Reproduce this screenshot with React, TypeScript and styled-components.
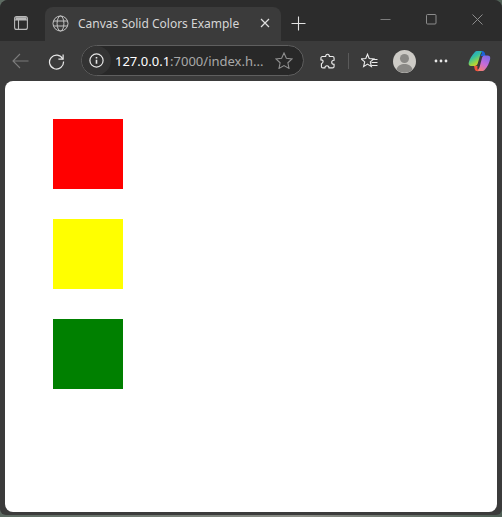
import * as React from "react";
import styled, { createGlobalStyle } from "styled-components";

const GlobalStyle = createGlobalStyle`
  html, body {
    margin: 0;
    padding: 0;
    height: 517px;
    overflow: hidden;
    background: linear-gradient(90deg, #5d6b62 0, #8d8f88 60%, #4f5f55 100%);
  }
`;

const SWindow = styled.div`
  width: 502px;
  height: 515px;
  background: #3b3b3b;
  border-radius: 8px 8px 6px 6px;
  display: flex;
  flex-direction: column;
  overflow: hidden;
  font-family: "Noto Sans", "Open Sans", sans-serif;
`;

const STitleBar = styled.div`
  height: 41px;
  flex: none;
  background: #2c2c2c;
  display: flex;
  align-items: flex-end;
  padding-left: 14px;
`;

const SSideButton = styled.div`
  width: 15px;
  height: 36px;
  display: flex;
  align-items: center;
  margin-right: 16px;
  align-self: flex-end;
  padding-bottom: 0;
`;

const STab = styled.div`
  width: 236px;
  height: 34px;
  background: #3b3b3b;
  border-radius: 8px 8px 0 0;
  display: flex;
  align-items: center;
  padding: 0 11px 2px 7px;
  box-sizing: border-box;
`;

const STabTitle = styled.span`
  flex: 1;
  margin-left: 9px;
  font-size: 12px;
  color: #d6d6d6;
  white-space: nowrap;
`;

const SNewTab = styled.div`
  width: 16px;
  height: 36px;
  margin-left: 10px;
  display: flex;
  align-items: center;
`;

const SCaptions = styled.div`
  margin-left: auto;
  align-self: flex-start;
  display: flex;
  height: 41px;
  padding-right: 2px;
`;

const SCaption = styled.div`
  width: 46px;
  display: flex;
  justify-content: center;
  padding-top: 14px;
  box-sizing: border-box;
`;

const SToolbar = styled.div`
  height: 40px;
  flex: none;
  display: flex;
  align-items: center;
  padding-left: 12px;
  box-sizing: border-box;
`;

const SToolIcon = styled.div<{ $left: number }>`
  display: flex;
  align-items: center;
  justify-content: center;
  flex: none;
  margin-left: ${({ $left }) => $left}px;
`;

const SAddressBar = styled.div`
  width: 223px;
  height: 31px;
  margin: 0 0 1px 16px;
  flex: none;
  box-sizing: border-box;
  background: #282828;
  border: 1px solid #5f5f5f;
  border-radius: 16px;
  display: flex;
  align-items: center;
  padding-right: 10px;
`;

const SInfoChip = styled.div`
  width: 29px;
  height: 29px;
  border-radius: 50%;
  background: #333333;
  display: flex;
  align-items: center;
  justify-content: center;
  flex: none;
`;

const SUrl = styled.span`
  flex: 1;
  margin-left: 4px;
  font-size: 13px;
  color: #a8a8a8;
  white-space: nowrap;
`;

const SHost = styled.span`
  color: #ffffff;
`;

const SDivider = styled.div`
  width: 1px;
  height: 16px;
  background: #5a5a5a;
  margin-left: 13px;
  flex: none;
`;

const SContent = styled.div`
  flex: 1;
  margin: 0 5px 3px;
  background: #ffffff;
  border-radius: 8px;
  padding: 38px 48px;
  display: flex;
  flex-direction: column;
  gap: 30px;
`;

const SSwatch = styled.div<{ $color: string }>`
  width: 70px;
  height: 70px;
  background: ${({ $color }) => $color};
`;

const App = () => {
  return (
    <>
      <GlobalStyle />
      <SWindow>
        <STitleBar>
          <SSideButton>
            <svg width="14" height="14" viewBox="0 0 14 14" fill="none" stroke="#b9b9b9" strokeWidth="1.1">
              <rect x="0.6" y="0.6" width="12.8" height="12.8" rx="2" />
              <path d="M0.6 4h12.800M4.500 4v9.400" />
              <path d="M1.500 1.200h11V4h-11z" fill="#b9b9b9" stroke="none" />
            </svg>
          </SSideButton>
          <STab>
            <svg width="17" height="17" viewBox="0 0 17 17" fill="none" stroke="#c4c4c4" strokeWidth="1">
              <circle cx="8.5" cy="8.5" r="7.5" />
              <ellipse cx="8.5" cy="8.5" rx="3.4" ry="7.5" />
              <path d="M1.4 6h14.2M1.4 11h14.2" />
            </svg>
            <STabTitle>Canvas Solid Colors Example</STabTitle>
            <svg width="10" height="10" viewBox="0 0 10 10" stroke="#e0e0e0" strokeWidth="1.2">
              <path d="M1 1l8 8M9 1l-8 8" />
            </svg>
          </STab>
          <SNewTab>
            <svg width="15" height="15" viewBox="0 0 15 15" stroke="#e2e2e2" strokeWidth="1.1">
              <path d="M7.5 0.5v14M0.5 7.5h14" />
            </svg>
          </SNewTab>
          <SCaptions>
            <SCaption>
              <svg width="11" height="11" viewBox="0 0 11 11" stroke="#7d7d7d" strokeWidth="1">
                <path d="M0.5 5.5h10" />
              </svg>
            </SCaption>
            <SCaption>
              <svg width="11" height="11" viewBox="0 0 11 11" fill="none" stroke="#8c8c8c" strokeWidth="1">
                <rect x="0.5" y="0.5" width="9.5" height="9.5" rx="1" />
              </svg>
            </SCaption>
            <SCaption>
              <svg width="11" height="11" viewBox="0 0 11 11" stroke="#8c8c8c" strokeWidth="1">
                <path d="M0.5 0.5l10 10M10.5 0.5l-10 10" />
              </svg>
            </SCaption>
          </SCaptions>
        </STitleBar>
        <SToolbar>
          <SToolIcon $left={0}>
            <svg width="17" height="16" viewBox="0 0 17 16" fill="none" stroke="#7b7b7b" strokeWidth="1.1">
              <path d="M16.5 8H1M8 1L1 8l7 7" />
            </svg>
          </SToolIcon>
          <SToolIcon $left={19}>
            <svg width="17" height="17" viewBox="0 0 18 18" fill="none" stroke="#e8e8e8" strokeWidth="1.3">
              <path d="M15.6 6.2A7.4 7.4 0 1 0 16.4 9" />
              <path d="M16 1.5v5h-5" />
            </svg>
          </SToolIcon>
          <SAddressBar>
            <SInfoChip>
              <svg width="15" height="15" viewBox="0 0 15 15" fill="none" stroke="#e6e6e6" strokeWidth="1.2">
                <circle cx="7.5" cy="7.5" r="6.6" />
                <path d="M7.5 6.8v4" strokeWidth="1.6" />
                <path d="M7.5 4v1.6" strokeWidth="1.6" />
              </svg>
            </SInfoChip>
            <SUrl>
              <SHost>127.0.0.1</SHost>:7000/index.h...
            </SUrl>
            <svg width="18" height="17" viewBox="0 0 18 17" fill="none" stroke="#8f8f8f" strokeWidth="1.1">
              <path d="M9 1l2.4 5.2 5.6.7-4.1 3.9 1.1 5.6L9 13.6l-5 2.8 1.1-5.6L1 6.9l5.6-.7z" />
            </svg>
          </SAddressBar>
          <SToolIcon $left={16}>
            <svg width="15" height="17" viewBox="0 0 16 17" fill="none" stroke="#ececec" strokeWidth="1.2">
              <path d="M6 3.2C6 1.6 6.9.8 8 .8s2 .8 2 2.4h3.4c.8 0 1.6.6 1.6 1.6v2.4c-1.5 0-2.5.8-2.5 2.1s1 2.2 2.5 2.2v2.2c0 1-.8 1.6-1.6 1.6H9.6c0-1.4-.9-2.3-2.2-2.3s-2.2.9-2.2 2.3H3c-.8 0-1.5-.7-1.5-1.6v-2.7C2.500 10.500 3.300 9.700 3.300 8.600S2.500 6.700 1 6.700V4.800C1 3.800 1.800 3.200 2.600 3.200z" />
            </svg>
          </SToolIcon>
          <SDivider />
          <SToolIcon $left={12}>
            <svg width="17" height="17" viewBox="0 0 17 17" fill="none" stroke="#ececec" strokeWidth="1.1">
              <path d="M6.500 1.200l1.700 4.300 4.600.4-3.500 3 1.100 4.700-3.900-2.500-3.900 2.500 1.100-4.700-3.500-3 4.600-.4z" />
              <path d="M11.500 6.500h5M10.500 9.500h6M10.500 12.500h6" />
            </svg>
          </SToolIcon>
          <SToolIcon $left={15}>
            <svg width="23" height="23" viewBox="0 0 23 23">
              <circle cx="11.500" cy="11.500" r="11.500" fill="#cdcbc6" />
              <circle cx="11.500" cy="8.500" r="4.500" fill="#8a8986" />
              <path d="M3.500 19.500c1-4 4.500-5.500 8-5.500s7 1.500 8 5.500a11.500 11.500 0 0 1-16 0z" fill="#8a8986" />
            </svg>
          </SToolIcon>
          <SToolIcon $left={18}>
            <svg width="14" height="4" viewBox="0 0 14 4" fill="#e8e8e8">
              <circle cx="2" cy="2" r="1.400" />
              <circle cx="7" cy="2" r="1.400" />
              <circle cx="12" cy="2" r="1.400" />
            </svg>
          </SToolIcon>
          <SToolIcon $left={20}>
            <svg width="23" height="22" viewBox="0 0 23 22">
              <defs>
                <linearGradient id="copilotLeft" x1="0" y1="0" x2="0.6" y2="1">
                  <stop offset="0" stopColor="#1f8fe0" />
                  <stop offset="0.45" stopColor="#35c1a0" />
                  <stop offset="0.8" stopColor="#a6d63a" />
                  <stop offset="1" stopColor="#f2b632" />
                </linearGradient>
                <linearGradient id="copilotRight" x1="0.7" y1="0" x2="0.2" y2="1">
                  <stop offset="0" stopColor="#7e6be8" />
                  <stop offset="0.5" stopColor="#c76bd8" />
                  <stop offset="1" stopColor="#f7806a" />
                </linearGradient>
              </defs>
              <path d="M6.500 2.500C7.300 1.300 8.500 1 9.500 1h6c-1.800.6-2.700 2.200-3.300 4l-2.500 8.500c-.5 1.500-1.500 2.500-3 2.500H3C1.200 16 .3 14.600.7 12.800 1.500 9 4 5 6.500 2.500z" fill="url(#copilotLeft)" />
              <path d="M12.500 1h1.500c1.800 0 2.500.9 3 2.500L17.500 6h-5L14 3c.3-.9-.5-2-1.500-2z" fill="#1b62d6" />
              <path d="M16.500 5.500h3c1.800 0 3 1.200 2.700 3.200-.6 3.700-2.700 8-5.200 10.800-.8 1-2 1.500-3 1.500H8c1.800-.6 3-2.100 3.600-4l2.300-8.800c.4-1.400 1.200-2.700 2.600-2.700z" fill="url(#copilotRight)" />
              <path d="M6 16h3.600c-.5 1.500-.2 3.400.8 4.800l.3.500H9.500c-1.500 0-2.400-.8-2.800-2.200z" fill="#f0533c" />
            </svg>
          </SToolIcon>
        </SToolbar>
        <SContent>
          <SSwatch $color="#ff0000" />
          <SSwatch $color="#ffff00" />
          <SSwatch $color="#008000" />
        </SContent>
      </SWindow>
    </>
  );
};

export default App;
